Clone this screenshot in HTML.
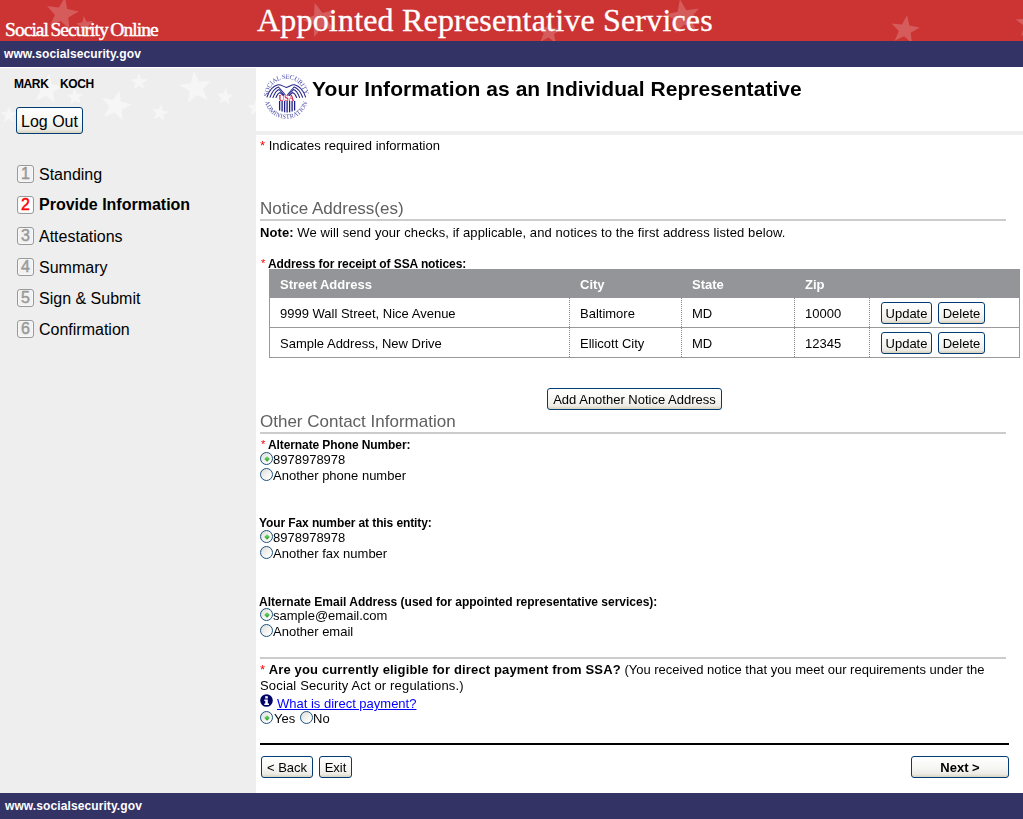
<!DOCTYPE html>
<html><head><meta charset="utf-8">
<style>
*{margin:0;padding:0;box-sizing:border-box}
html,body{width:1023px;height:819px;overflow:hidden;background:#fff;font-family:"Liberation Sans",sans-serif;color:#000}
.a{position:absolute;white-space:nowrap}
#hdr{position:absolute;left:0;top:0;width:1023px;height:41px;background:#cc3333;overflow:hidden}
#band{position:absolute;left:0;top:41px;width:1023px;height:26px;background:#333366}
#side{position:absolute;left:0;top:68px;width:256px;height:725px;background:#eeeeee;overflow:hidden}
#foot{position:absolute;left:0;top:793px;width:1023px;height:26px;background:#333366}
.serif{font-family:"Liberation Serif",serif;color:#fff}
.www{font-size:12px;font-weight:bold;color:#fff;line-height:14px;letter-spacing:0.1px}
.btn{position:absolute;padding-top:1px;border:1px solid #003c74;border-radius:3px;background:linear-gradient(#ffffff 0%,#f7f7f4 50%,#ecebe6 85%,#d8d2bd 100%);font-size:13px;text-align:center;white-space:nowrap;color:#000}
.step{position:absolute;left:17px;width:17px;height:18px;border:1px solid #999;border-radius:3px;background:#f2f2f2;box-shadow:inset 0 0 0 1px #f8f8f8;color:#999;-webkit-text-stroke:0.45px currentColor;font-size:16px;line-height:16px;text-align:center}
.stxt{position:absolute;left:39px;font-size:16px;line-height:18px;white-space:nowrap}
.t13{font-size:13px;line-height:16px}
.b12{font-size:12px;font-weight:bold;line-height:14px;letter-spacing:-0.1px}
.h16{font-size:17px;font-weight:normal;color:#606060;line-height:18px}
.rule{position:absolute;height:2px;background:#cccccc}
.req{color:#ff0000}
.radio{position:absolute;width:13px;height:13px;border:1px solid #1c5180;border-radius:50%;background:linear-gradient(135deg,#dcdcd6 0%,#eeeeea 40%,#ffffff 85%)}
.radio.on::after{content:"";position:absolute;left:3.7px;top:3.9px;width:4.2px;height:4.2px;transform:rotate(45deg);border-radius:0.5px;background:linear-gradient(135deg,#7ee07e,#1e9e1e)}
.vd{top:298px;width:1px;height:59px;background:repeating-linear-gradient(#888 0 1px,transparent 1px 2px)}
.th{top:277px;font-size:13px;font-weight:bold;color:#fff;line-height:16px}
</style></head><body><div style="position:absolute;left:0;top:0;width:1023px;height:819px;will-change:opacity;opacity:0.999">

<div id="hdr">
  <svg class="a" style="left:0;top:0" width="1023" height="41"><g fill="#ffffff" fill-opacity="0.2"><polygon points="65.0,-2.7 67.1,9.0 78.8,11.6 68.3,17.4 69.5,29.3 60.8,21.0 49.8,25.8 54.9,15.0 47.0,6.0 58.9,7.6"/><polygon points="83.7,16.1 86.8,21.7 93.1,21.1 88.7,25.7 91.3,31.5 85.5,28.7 80.8,32.9 81.6,26.7 76.1,23.4 82.4,22.3"/><polygon points="314.7,2.8 322.5,12.9 334.7,9.7 327.6,20.1 334.4,30.8 322.2,27.2 314.1,37.0 313.8,24.3 302.0,19.7 314.0,15.5"/><polygon points="550.1,19.0 552.6,27.9 561.7,29.1 554.0,34.1 555.7,43.1 548.5,37.4 540.5,41.8 543.7,33.2 537.0,26.9 546.2,27.3"/><polygon points="679.9,-0.7 686.3,10.2 698.9,8.5 690.5,18.1 695.9,29.5 684.3,24.4 675.1,33.2 676.3,20.5 665.2,14.5 677.6,11.7"/><polygon points="907.1,15.1 909.4,25.5 919.8,27.4 910.7,32.8 912.0,43.2 904.1,36.2 894.6,40.8 898.8,31.1 891.5,23.4 902.0,24.4"/><polygon points="1030.0,9.0 1033.7,18.9 1044.3,19.4 1036.0,25.9 1038.8,36.1 1030.0,30.3 1021.2,36.1 1024.0,25.9 1015.7,19.4 1026.3,18.9"/></g></svg>
  <div class="a serif" style="left:5px;top:19px;font-size:19.5px;line-height:22px;letter-spacing:-0.95px;word-spacing:-1.5px;-webkit-text-stroke:0.45px #fff">Social Security Online</div>
  <div class="a serif" style="left:257px;top:2px;font-size:32px;line-height:36px;letter-spacing:0.19px;-webkit-text-stroke:0.3px #fff">Appointed Representative Services</div>
</div>
<div id="band"><div class="a www" style="left:4px;top:6px">www.socialsecurity.gov</div></div>

<div id="side">
  <svg class="a" style="left:0;top:0" width="256" height="70"><g fill="#ffffff" fill-opacity="0.45"><polygon points="49.2,5.2 51.7,16.2 62.8,18.2 53.0,23.9 54.5,35.1 46.1,27.7 35.9,32.5 40.4,22.2 32.6,14.0 43.8,15.1"/><polygon points="74.2,20.0 76.9,25.8 83.3,25.5 78.7,29.9 80.9,35.8 75.3,32.8 70.4,36.7 71.5,30.5 66.2,27.0 72.5,26.1"/><polygon points="119.3,22.3 121.0,33.5 131.9,36.3 121.8,41.4 122.5,52.6 114.6,44.6 104.1,48.7 109.3,38.7 102.1,30.0 113.3,31.9"/><polygon points="139.0,5.0 141.2,10.9 147.6,11.2 142.6,15.2 144.3,21.3 139.0,17.8 133.7,21.3 135.4,15.2 130.4,11.2 136.8,10.9"/><polygon points="161.6,36.1 162.7,42.4 168.9,43.7 163.3,46.8 163.9,53.1 159.3,48.7 153.5,51.3 156.3,45.5 152.1,40.8 158.3,41.6"/><polygon points="193.6,3.2 199.4,13.7 211.3,12.5 203.0,21.2 207.8,32.2 197.0,27.1 188.0,35.0 189.6,23.1 179.3,17.0 191.0,14.9"/><polygon points="225.8,20.0 227.5,26.1 233.8,27.0 228.5,30.5 229.6,36.7 224.7,32.8 219.1,35.8 221.3,29.9 216.7,25.5 223.1,25.8"/><polygon points="9.0,38.0 11.2,43.9 17.6,44.2 12.6,48.2 14.3,54.3 9.0,50.8 3.7,54.3 5.4,48.2 0.4,44.2 6.8,43.9"/><polygon points="256.0,31.0 258.2,36.9 264.6,37.2 259.6,41.2 261.3,47.3 256.0,43.8 250.7,47.3 252.4,41.2 247.4,37.2 253.8,36.9"/></g></svg>
  <div class="a b12" style="left:14px;top:9px;letter-spacing:-0.4px">MARK</div><div class="a b12" style="left:60px;top:9px;letter-spacing:-0.4px">KOCH</div>
  <div class="btn" style="left:16px;top:39px;width:67px;height:27px;font-size:16px;line-height:26px">Log Out</div>

  <div class="step" style="top:97px">1</div><div class="stxt" style="top:98px">Standing</div>
  <div class="step" style="top:128px;background:#fff;color:#f00">2</div><div class="stxt" style="top:128px;font-weight:bold">Provide Information</div>
  <div class="step" style="top:159px">3</div><div class="stxt" style="top:160px">Attestations</div>
  <div class="step" style="top:190px">4</div><div class="stxt" style="top:191px">Summary</div>
  <div class="step" style="top:221px">5</div><div class="stxt" style="top:222px">Sign &amp; Submit</div>
  <div class="step" style="top:252px">6</div><div class="stxt" style="top:253px">Confirmation</div>
</div>

<!-- content -->
<div class="a" style="left:256px;top:131px;width:767px;height:4px;background:#eeeeee"></div>
<div class="a" style="left:312px;top:77px;font-size:21px;font-weight:bold;line-height:24px;letter-spacing:0.05px">Your Information as an Individual Representative</div>

<svg class="a" style="left:262px;top:72px" width="50" height="50" viewBox="0 0 50 50">
<defs>
<path id="arcT" d="M 6.11 24.36 A 18.2 18.2 0 0 1 42.49 24.36"/>
<path id="arcB" d="M 2.98 29.53 A 21.8 21.8 0 0 0 45.62 29.53"/>
</defs>
<text font-family="Liberation Serif" font-size="6.6" fill="#4a4aa8" ><textPath href="#arcT" textLength="54.2" lengthAdjust="spacing">SOCIAL SECURITY</textPath></text>
<text font-family="Liberation Serif" font-size="6.4" fill="#4a4aa8" ><textPath href="#arcB" textLength="58.2" lengthAdjust="spacing">ADMINISTRATION</textPath></text>
<g fill="none" stroke="#25258a" stroke-width="1.05" stroke-linecap="round">
<path d="M 5 25 C 7 19, 11 14, 16 12.8 C 19 12.5, 21 14.5, 24.3 15.5 C 27.5 14.5, 29.5 12.5, 32.5 12.8 C 37.5 14, 41.5 19, 43.6 25"/>
<path d="M 8 25.3 C 10 20, 13 16, 16.5 15 L 23 22.5"/>
<path d="M 11 25.5 C 12.5 21.5, 14.5 18.5, 17 17.5 L 22 23"/>
<path d="M 14 25.5 C 15 23, 16.5 21, 18 20.5 L 21.5 23.5"/>
<path d="M 40.6 25.3 C 38.6 20, 35.6 16, 32.1 15 L 25.6 22.5"/>
<path d="M 37.6 25.5 C 36.1 21.5, 34.1 18.5, 31.6 17.5 L 26.6 23"/>
<path d="M 34.6 25.5 C 33.6 23, 32.1 21, 30.6 20.5 L 27.1 23.5"/>
</g>
<text x="24.4" y="28.7" font-family="Liberation Serif" font-weight="bold" font-size="8.2" fill="#d4204c" text-anchor="middle" textLength="16" lengthAdjust="spacingAndGlyphs">USA</text>
<g stroke="#1e1e88" stroke-width="1.3">
<line x1="17.6" y1="29" x2="17.6" y2="38.5"/><line x1="20.1" y1="29" x2="20.1" y2="39.5"/><line x1="22.6" y1="29" x2="22.6" y2="40.3"/><line x1="25.1" y1="29" x2="25.1" y2="40.6"/><line x1="27.6" y1="29" x2="27.6" y2="40.3"/><line x1="30.1" y1="29" x2="30.1" y2="39.5"/><line x1="32.6" y1="29" x2="32.6" y2="38.5"/>
</g>
</svg>
<div class="a t13" style="left:260px;top:138px"><span class="req">*</span> Indicates required information</div>

<div class="a h16" style="left:260px;top:200px">Notice Address(es)</div>
<div class="rule" style="left:260px;top:219px;width:746px"></div>
<div class="a t13" style="left:260px;top:225px;letter-spacing:0.09px"><b>Note:</b> We will send your checks, if applicable, and notices to the first address listed below.</div>
<div class="a req" style="left:261px;top:258px;font-size:11px;line-height:11px">*</div><div class="a b12" style="left:268px;top:257px">Address for receipt of SSA notices:</div>

<div class="a" style="left:269px;top:269px;width:751px;height:89px;border:1px solid #999;border-top:0"></div>
<div class="a" style="left:269px;top:269px;width:751px;height:29px;background:#939598"></div>
<div class="a" style="left:270px;top:327px;width:749px;height:1px;background:#999"></div>
<div class="a vd" style="left:569px"></div><div class="a vd" style="left:681px"></div><div class="a vd" style="left:794px"></div><div class="a vd" style="left:869px"></div>
<div class="a th" style="left:280px">Street Address</div>
<div class="a th" style="left:580px">City</div>
<div class="a th" style="left:692px">State</div>
<div class="a th" style="left:805px">Zip</div>
<div class="a t13" style="left:280px;top:306px">9999 Wall Street, Nice Avenue</div>
<div class="a t13" style="left:580px;top:306px">Baltimore</div>
<div class="a t13" style="left:692px;top:306px">MD</div>
<div class="a t13" style="left:805px;top:306px">10000</div>
<div class="btn" style="left:881px;top:302px;width:51px;height:22px;line-height:20px">Update</div>
<div class="btn" style="left:938px;top:302px;width:47px;height:22px;line-height:20px">Delete</div>
<div class="a t13" style="left:280px;top:336px">Sample Address, New Drive</div>
<div class="a t13" style="left:580px;top:336px">Ellicott City</div>
<div class="a t13" style="left:692px;top:336px">MD</div>
<div class="a t13" style="left:805px;top:336px">12345</div>
<div class="btn" style="left:881px;top:332px;width:51px;height:22px;line-height:20px">Update</div>
<div class="btn" style="left:938px;top:332px;width:47px;height:22px;line-height:20px">Delete</div>

<div class="btn" style="left:547px;top:388px;width:175px;height:22px;line-height:20px">Add Another Notice Address</div>

<div class="a h16" style="left:260px;top:413px">Other Contact Information</div>
<div class="rule" style="left:260px;top:432px;width:746px"></div>

<div class="a req" style="left:261px;top:439px;font-size:11px;line-height:11px">*</div><div class="a b12" style="left:268px;top:438px">Alternate Phone Number:</div>
<div class="radio on" style="left:260px;top:452px"></div><div class="a t13" style="left:273px;top:452px">8978978978</div>
<div class="radio" style="left:260px;top:468px"></div><div class="a t13" style="left:273px;top:468px">Another phone number</div>

<div class="a b12" style="left:259px;top:516px">Your Fax number at this entity:</div>
<div class="radio on" style="left:260px;top:530px"></div><div class="a t13" style="left:273px;top:530px">8978978978</div>
<div class="radio" style="left:260px;top:546px"></div><div class="a t13" style="left:273px;top:546px">Another fax number</div>

<div class="a b12" style="left:259px;top:595px;letter-spacing:0">Alternate Email Address (used for appointed representative services):</div>
<div class="radio on" style="left:260px;top:608px"></div><div class="a t13" style="left:273px;top:608px">sample@email.com</div>
<div class="radio" style="left:260px;top:624px"></div><div class="a t13" style="left:273px;top:624px">Another email</div>

<div class="rule" style="left:260px;top:657px;width:746px"></div>
<div class="a t13" style="left:260px;top:662px"><span class="req">*</span> <b style="letter-spacing:0.15px">Are you currently eligible for direct payment from SSA?</b> (You received notice that you meet our requirements under the</div>
<div class="a t13" style="left:260px;top:678px;letter-spacing:0.16px">Social Security Act or regulations.)</div>
<svg class="a" style="left:260px;top:694px" width="14" height="14" viewBox="0 0 14 14"><circle cx="6.5" cy="6.5" r="6.3" fill="#000066"/><rect x="5.2" y="2.2" width="2.6" height="2.3" fill="#fff"/><path d="M4.3 5.6 H7.8 V9.6 H9 V11 H4.3 V9.6 H5.3 V7 H4.3 Z" fill="#fff"/></svg>
<div class="a t13" style="left:277px;top:696px;color:#0000ff;text-decoration:underline">What is direct payment?</div>
<div class="radio on" style="left:260px;top:711px"></div><div class="a t13" style="left:274px;top:711px">Yes</div>
<div class="radio" style="left:300px;top:711px"></div><div class="a t13" style="left:313px;top:711px">No</div>

<div class="a" style="left:260px;top:743px;width:749px;height:2px;background:#000"></div>
<div class="btn" style="left:261px;top:756px;width:52px;height:22px;line-height:20px">&lt; Back</div>
<div class="btn" style="left:319px;top:756px;width:33px;height:22px;line-height:20px">Exit</div>
<div class="btn" style="left:911px;top:756px;width:98px;height:22px;line-height:20px;font-weight:bold">Next &gt;</div>

<div id="foot"><div class="a www" style="left:5px;top:6px">www.socialsecurity.gov</div></div>
</div></body></html>
